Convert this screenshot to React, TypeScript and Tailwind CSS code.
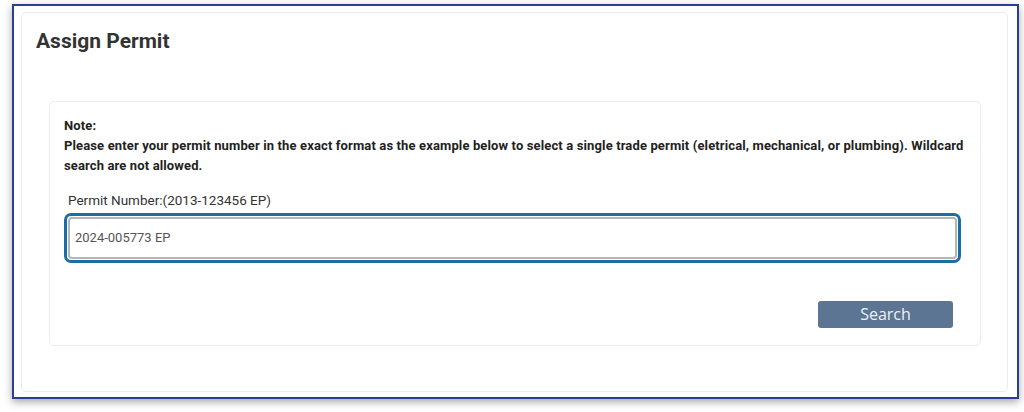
import React from "react";

export default function App() {
  return (
    <div className="w-[1024px] h-[412px] bg-white pt-[4px] pl-[12px]" style={{ fontFamily: "Roboto, 'Liberation Sans', sans-serif" }}>
      <div className="w-[1007px] h-[395px] border-2 border-[#2c3e91] bg-white shadow-[0_3px_8px_rgba(0,0,0,0.35)] pl-[7px] pr-[9px] pt-[6px] pb-[5px]">
        <div className="h-full border border-[#ececec] rounded-[5px] bg-white pl-[27px] pr-[26px]">
          <h1 className="text-[21px] font-bold text-[#333] leading-[24px] mt-[16px] -ml-[13px]">Assign Permit</h1>
          <div className="mt-[48px] border border-[#ececec] rounded-[5px] h-[245px] pl-[14px] pr-[14px] pt-[14px]">
            <div className="text-[13px] font-bold text-[#222] leading-[20px] tracking-[0.13px]">
              <div>Note:</div>
              <div>
                Please enter your permit number in the exact format as the example below to select a single trade permit (eletrical, mechanical, or plumbing). Wildcard search are not allowed.
              </div>
            </div>
            <div className="mt-[16px] pl-[4px] text-[13.5px] text-[#333] leading-[16px]">Permit Number:(2013-123456 EP)</div>
            <div className="mt-[5px] mr-[5px] rounded-[7px] border-[3px] border-[#1b6ea3] p-[1px]">
              <div className="h-[42px] border-2 border-[#b5b5b5] rounded-[4px] flex items-center pl-[5px] text-[13px] text-[#555]">
                2024-005773 EP
              </div>
            </div>
            <div className="flex justify-end mt-[38px] pr-[13px]">
              <button className="w-[135px] h-[27px] bg-[#5b7592] rounded-[3px] text-[#eef2f6] text-[16px] leading-[27px]" style={{ fontFamily: "'Open Sans', sans-serif" }}>
                Search
              </button>
            </div>
          </div>
        </div>
      </div>
    </div>
  );
}
